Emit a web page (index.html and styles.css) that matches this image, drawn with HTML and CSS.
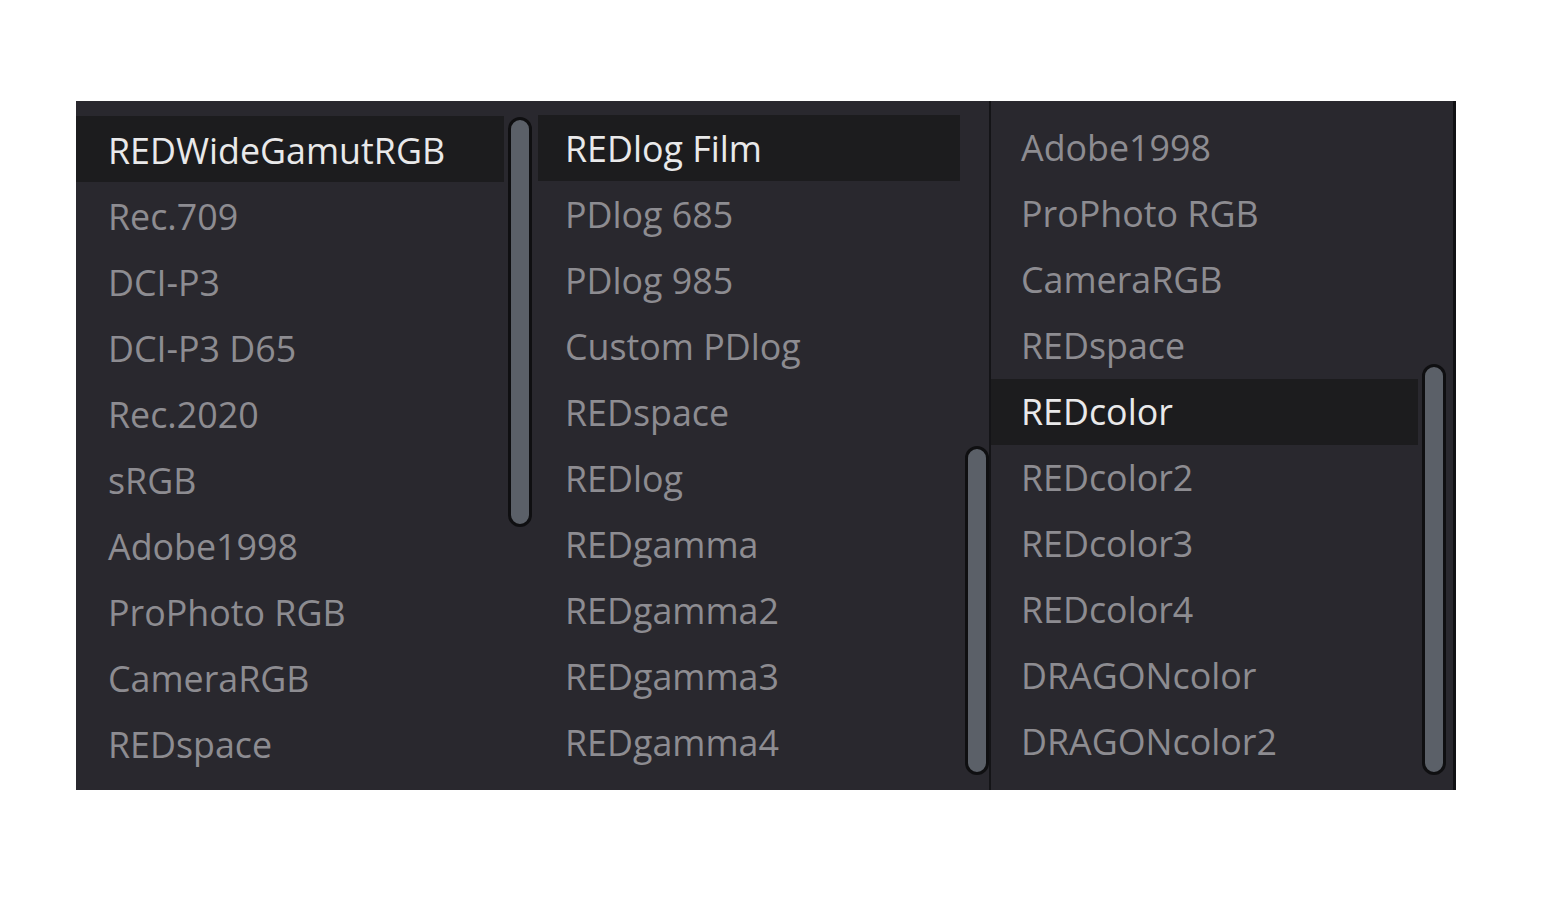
FILE: index.html
```html
<!DOCTYPE html>
<html>
<head>
<meta charset="utf-8">
<link rel="stylesheet" href="styles.css">
</head>
<body>
<div class="panel">
  <div class="col col1">
    <ul class="list">
      <li class="row sel">REDWideGamutRGB</li>
      <li class="row">Rec.709</li>
      <li class="row">DCI-P3</li>
      <li class="row">DCI-P3 D65</li>
      <li class="row">Rec.2020</li>
      <li class="row">sRGB</li>
      <li class="row">Adobe1998</li>
      <li class="row">ProPhoto RGB</li>
      <li class="row">CameraRGB</li>
      <li class="row">REDspace</li>
    </ul>
    <div class="thumb thumb1"></div>
  </div>
  <div class="col col2">
    <ul class="list">
      <li class="row sel">REDlog Film</li>
      <li class="row">PDlog 685</li>
      <li class="row">PDlog 985</li>
      <li class="row">Custom PDlog</li>
      <li class="row">REDspace</li>
      <li class="row">REDlog</li>
      <li class="row">REDgamma</li>
      <li class="row">REDgamma2</li>
      <li class="row">REDgamma3</li>
      <li class="row">REDgamma4</li>
    </ul>
    <div class="thumb thumb2"></div>
  </div>
  <div class="col col3">
    <ul class="list">
      <li class="row">Adobe1998</li>
      <li class="row">ProPhoto RGB</li>
      <li class="row">CameraRGB</li>
      <li class="row">REDspace</li>
      <li class="row sel">REDcolor</li>
      <li class="row">REDcolor2</li>
      <li class="row">REDcolor3</li>
      <li class="row">REDcolor4</li>
      <li class="row">DRAGONcolor</li>
      <li class="row">DRAGONcolor2</li>
    </ul>
    <div class="thumb thumb3"></div>
  </div>
</div>
</body>
</html>
```

FILE: styles.css
```css
html, body {
  margin: 0;
  padding: 0;
  background: #ffffff;
}

body {
  padding-top: 101px;
  padding-left: 76px;
  font-family: "Open Sans", "Noto Sans", sans-serif;
}

.panel {
  display: flex;
  width: 1380px;
  height: 689px;
  background: #29282e;
  box-sizing: border-box;
  border-right: 3px solid #111114;
  overflow: hidden;
}

.col {
  position: relative;
  height: 100%;
  box-sizing: border-box;
}

.col1 {
  width: 460px;
  padding-top: 15px;
}

.col2 {
  width: 455px;
  padding-top: 14px;
  padding-left: 2px;
  border-right: 2px solid #141417;
}

.col3 {
  flex: 1;
  padding-top: 14px;
}

.list {
  list-style: none;
  margin: 0;
  padding: 0;
}

.row {
  height: 66px;
  line-height: 68px;
  font-size: 35.8px;
  color: #8d8c91;
  white-space: nowrap;
  box-sizing: border-box;
}

.col2 .row {
  line-height: 67px;
}

.col3 .row {
  line-height: 64px;
}

.row.sel {
  background: #1c1c1e;
  color: #e9e9ea;
}

.col1 .row {
  width: 428px;
  padding-left: 32px;
}

.col2 .row {
  width: 422px;
  padding-left: 27px;
}

.col3 .row {
  width: 427px;
  padding-left: 30px;
}

.thumb {
  position: absolute;
  width: 24px;
  box-sizing: border-box;
  background: #5b6068;
  border: 3px solid #0f0f11;
  border-radius: 12px;
}

.thumb1 {
  left: 432px;
  top: 16px;
  height: 410px;
}

.thumb2 {
  left: 429px;
  top: 345px;
  height: 329px;
}

.thumb3 {
  left: 431px;
  top: 263px;
  height: 411px;
}
```
